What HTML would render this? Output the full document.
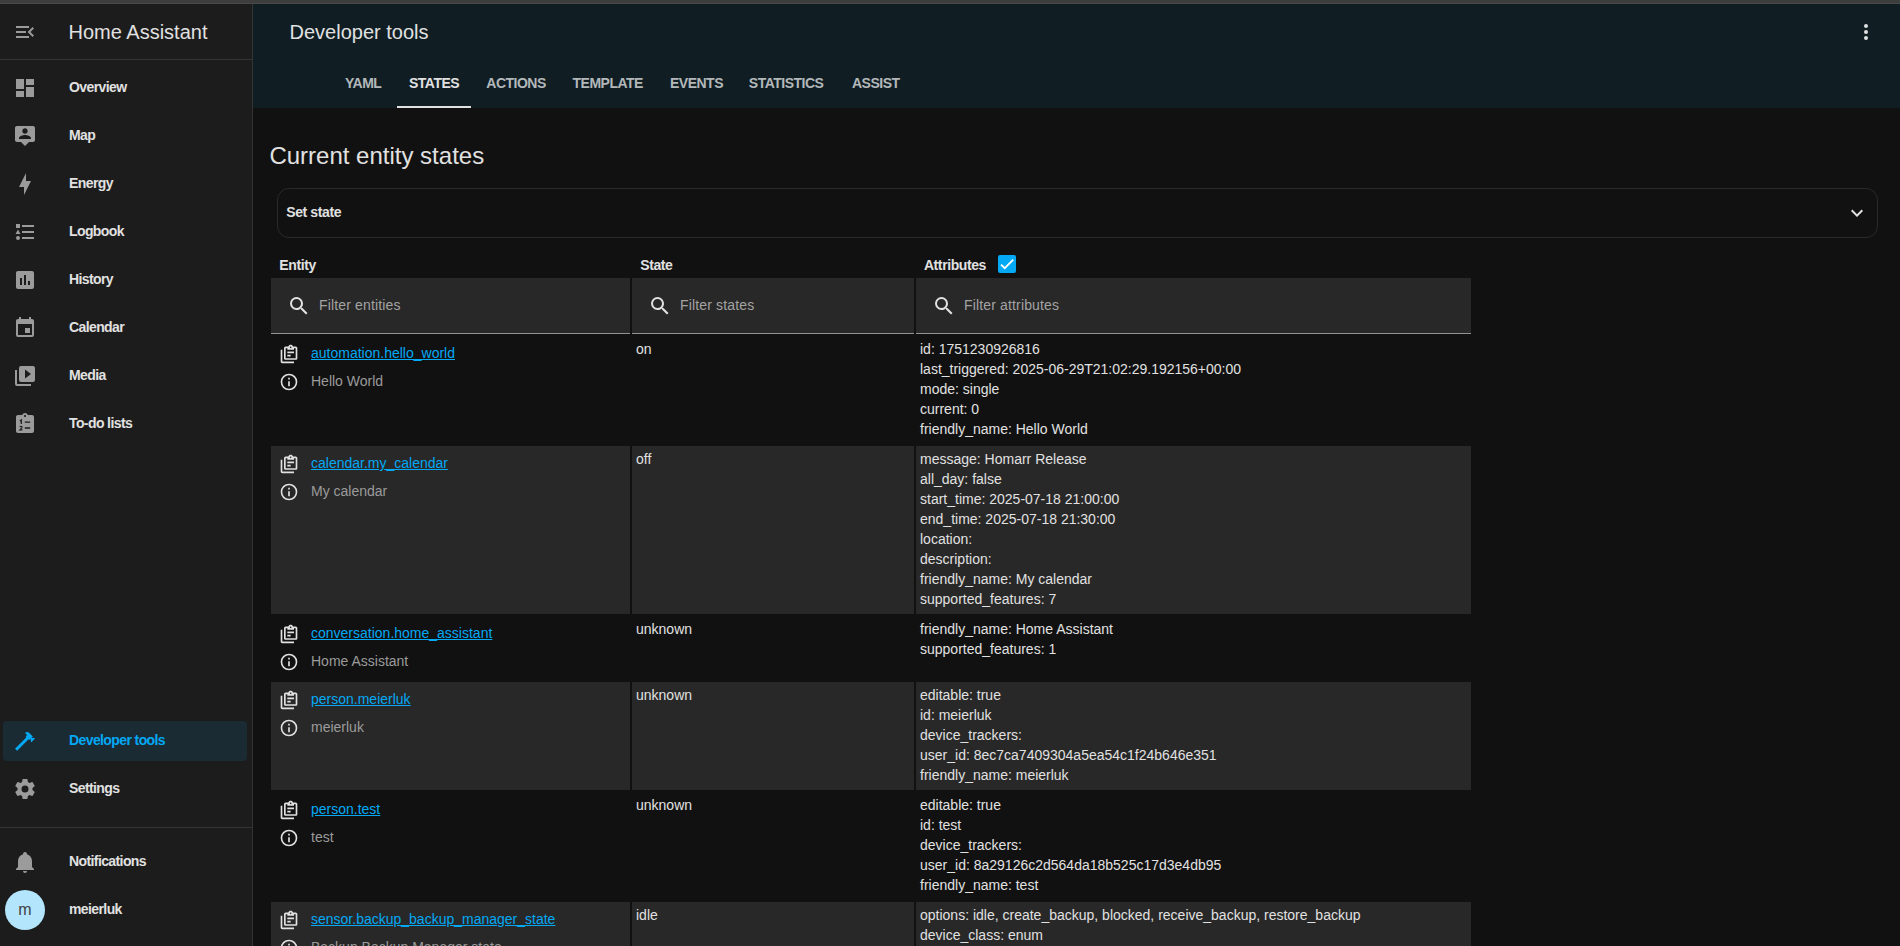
<!DOCTYPE html>
<html><head><meta charset="utf-8"><style>
html,body{margin:0;padding:0;width:1900px;height:946px;overflow:hidden;background:#111111;font-family:"Liberation Sans",sans-serif;}
#topbar{position:absolute;left:0;top:0;width:1900px;height:3px;background:#3d3d3d;border-bottom:1px solid #494949}
#sidebar{position:absolute;left:0;top:4px;width:252px;height:942px;background:#1c1c1c}
#header{position:absolute;left:253px;top:4px;width:1647px;height:104px;background:#101e24}
.hline{position:absolute;height:1px;background:#343434}
.vline{position:absolute;width:1px;background:#343434}
.ic{position:absolute;display:block}
.t{position:absolute;white-space:pre;color:#e1e1e1}
.h20{font-size:20px;line-height:24px}
.h24{font-size:24px;line-height:32px}
.side{font-size:14px;line-height:20px;font-weight:bold;letter-spacing:-0.6px}
.b14{font-size:14px;line-height:20px;font-weight:bold;letter-spacing:-0.4px}
.r14{font-size:14px;line-height:20px}
.sec{color:#9b9b9b}
.lnk{color:#03a9f4;text-decoration:underline}
.tab{font-size:14px;line-height:20px;font-weight:bold;letter-spacing:-0.5px;color:#b3b8ba}
.tab.act{color:#e1e1e1}
.sel{position:absolute;background:#1b2b34;border-radius:4px}
.avatar{position:absolute;width:40px;height:40px;border-radius:50%;background:#b3e5fc;color:#424242;font-size:16px;line-height:40px;text-align:center}
.card{position:absolute;border:1px solid #2a2a2a;border-radius:12px}
.cb{position:absolute;width:18px;height:18px;background:#03a9f4;border-radius:2px}
.filt{position:absolute;background:#282828}
.alt{position:absolute;background:#282828}
.fline{position:absolute;height:1px;background:#929292}
.ph{font-size:14px;line-height:20px;color:#a3a3a3;letter-spacing:0.15px}
</style></head><body>
<div id="topbar"></div>
<div id="sidebar"></div>
<div class="hline" style="left:0;top:59px;width:252px"></div>
<div class="vline" style="left:252px;top:4px;height:942px"></div>
<svg class="ic" style="left:13px;top:20px;width:24px;height:24px" viewBox="0 0 24 24"><path fill="#9b9b9b" d="M21,15.61L19.59,17L14.58,12L19.59,7L21,8.39L17.44,12L21,15.61M3,6H16V8H3V6M3,13V11H13V13H3M3,18V16H16V18H3Z"/></svg>
<div class="t h20" style="left:68.5px;top:20px;">Home Assistant</div>
<svg class="ic" style="left:13px;top:76px;width:24px;height:24px" viewBox="0 0 24 24"><path fill="#9b9b9b" d="M13,3V9H21V3M13,21H21V11H13M3,21H11V15H3M3,13H11V3H3V13Z"/></svg>
<div class="t side" style="left:69px;top:77px;">Overview</div>
<svg class="ic" style="left:13px;top:124px;width:24px;height:24px" viewBox="0 0 24 24"><path fill="#9b9b9b" d="M20 2H4C2.9 2 2 2.9 2 4V16C2 17.1 2.9 18 4 18H8L12 22L16 18H20C21.1 18 22 17.1 22 16V4C22 2.9 21.1 2 20 2M12 4.3C13.5 4.3 14.7 5.5 14.7 7S13.5 9.7 12 9.7 9.3 8.5 9.3 7 10.5 4.3 12 4.3M18 15H6V14.1C6 12.1 10 11 12 11S18 12.1 18 14.1V15Z"/></svg>
<div class="t side" style="left:69px;top:125px;">Map</div>
<svg class="ic" style="left:13px;top:172px;width:24px;height:24px" viewBox="0 0 24 24"><path fill="#9b9b9b" d="M11 15H6L13 1V9H18L11 23V15Z"/></svg>
<div class="t side" style="left:69px;top:173px;">Energy</div>
<svg class="ic" style="left:13px;top:220px;width:24px;height:24px" viewBox="0 0 24 24"><path fill="#9b9b9b" d="M5,9.5L7.5,14H2.5L5,9.5M3,4H7V8H3V4M5,20A2,2 0 0,0 7,18A2,2 0 0,0 5,16A2,2 0 0,0 3,18A2,2 0 0,0 5,20M9,5V7H21V5H9M9,19H21V17H9V19M9,13H21V11H9V13Z"/></svg>
<div class="t side" style="left:69px;top:221px;">Logbook</div>
<svg class="ic" style="left:13px;top:268px;width:24px;height:24px" viewBox="0 0 24 24"><path fill="#9b9b9b" d="M19 3H5C3.9 3 3 3.9 3 5V19C3 20.1 3.9 21 5 21H19C20.1 21 21 20.1 21 19V5C21 3.9 20.1 3 19 3M9 17H7V10H9V17M13 17H11V7H13V17M17 17H15V13H17V17Z"/></svg>
<div class="t side" style="left:69px;top:269px;">History</div>
<svg class="ic" style="left:13px;top:316px;width:24px;height:24px" viewBox="0 0 24 24"><path fill="#9b9b9b" d="M19,19H5V8H19M16,1V3H8V1H6V3H5C3.89,3 3,3.89 3,5V19A2,2 0 0,0 5,21H19A2,2 0 0,0 21,19V5C21,3.89 20.1,3 19,3H18V1M17,12H12V17H17V12Z"/></svg>
<div class="t side" style="left:69px;top:317px;">Calendar</div>
<svg class="ic" style="left:13px;top:364px;width:24px;height:24px" viewBox="0 0 24 24"><path fill="#9b9b9b" d="M4,6H2V20A2,2 0 0,0 4,22H18V20H4M22,4A2,2 0 0,0 20,2H8A2,2 0 0,0 6,4V16A2,2 0 0,0 8,18H20A2,2 0 0,0 22,16V4M12,14.5V5.5L18,10L12,14.5Z"/></svg>
<div class="t side" style="left:69px;top:365px;">Media</div>
<svg class="ic" style="left:13px;top:412px;width:24px;height:24px" viewBox="0 0 24 24"><path fill="#9b9b9b" d="M19 3H14.82C14.4 1.84 13.3 1 12 1S9.6 1.84 9.18 3H5C3.9 3 3 3.9 3 5V19C3 20.1 3.9 21 5 21H19C20.1 21 21 20.1 21 19V5C21 3.9 20.1 3 19 3M12 3C12.55 3 13 3.45 13 4S12.55 5 12 5 11 4.55 11 4 11.45 3 12 3Z"/><g fill="none" stroke="#1c1c1c"><path stroke-width="1.3" d="M6.9,9 8.3,8 V12"/><path stroke-width="1.1" d="M6.9,15.1 C7.1,14.5 7.6,14.3 8.1,14.3 C8.8,14.3 9.2,14.7 9.1,15.3 C9,15.8 8.6,16.2 6.9,17.9 H9.4"/><path stroke-width="1.3" d="M11.8,10.2 H17.2 M11.8,16 H17.2"/></g></svg>
<div class="t side" style="left:69px;top:413px;">To-do lists</div>
<div class="sel" style="left:3px;top:721px;width:244px;height:40px"></div>
<svg class="ic" style="left:13px;top:729px;width:24px;height:24px" viewBox="0 0 24 24"><path fill="#03a9f4" d="M2 19.63L13.43 8.2L12.72 7.5L14.14 6.07L12 3.89C13.2 2.7 15.09 2.7 16.27 3.89L19.87 7.5L18.45 8.91H21.29L22 9.62L18.45 13.21L17.74 12.5V9.62L16.27 11.04L15.56 10.33L4.13 21.76L2 19.63Z"/></svg>
<div class="t side" style="left:69px;top:730px;color:#03a9f4">Developer tools</div>
<svg class="ic" style="left:13px;top:777px;width:24px;height:24px" viewBox="0 0 24 24"><path fill="#9b9b9b" d="M12,15.5A3.5,3.5 0 0,1 8.5,12A3.5,3.5 0 0,1 12,8.5A3.5,3.5 0 0,1 15.5,12A3.5,3.5 0 0,1 12,15.5M19.43,12.97C19.47,12.65 19.5,12.33 19.5,12C19.5,11.67 19.47,11.34 19.43,11L21.54,9.37C21.73,9.22 21.78,8.95 21.66,8.73L19.66,5.27C19.54,5.05 19.27,4.96 19.05,5.05L16.56,6.05C16.04,5.66 15.5,5.32 14.87,5.07L14.5,2.42C14.46,2.18 14.25,2 14,2H10C9.75,2 9.54,2.18 9.5,2.42L9.13,5.07C8.5,5.32 7.96,5.66 7.44,6.05L4.95,5.05C4.73,4.96 4.46,5.05 4.34,5.27L2.34,8.73C2.21,8.95 2.27,9.22 2.46,9.37L4.57,11C4.53,11.34 4.5,11.67 4.5,12C4.5,12.33 4.53,12.65 4.57,12.97L2.46,14.63C2.27,14.78 2.21,15.05 2.34,15.27L4.34,18.73C4.46,18.95 4.73,19.03 4.95,18.95L7.44,17.94C7.96,18.34 8.5,18.68 9.13,18.93L9.5,21.58C9.54,21.82 9.75,22 10,22H14C14.25,22 14.46,21.82 14.5,21.58L14.87,18.93C15.5,18.67 16.04,18.34 16.56,17.94L19.05,18.95C19.27,19.03 19.54,18.95 19.66,18.73L21.66,15.27C21.78,15.05 21.73,14.78 21.54,14.63L19.43,12.97Z"/></svg>
<div class="t side" style="left:69px;top:778px;">Settings</div>
<div class="hline" style="left:0;top:827px;width:252px"></div>
<svg class="ic" style="left:13px;top:850px;width:24px;height:24px" viewBox="0 0 24 24"><path fill="#9b9b9b" d="M21,19V20H3V19L5,17V11C5,7.9 7.03,5.17 10,4.29C10,4.19 10,4.1 10,4A2,2 0 0,1 12,2A2,2 0 0,1 14,4C14,4.1 14,4.19 14,4.29C16.97,5.17 19,7.9 19,11V17L21,19M14,21A2,2 0 0,1 12,23A2,2 0 0,1 10,21"/></svg>
<div class="t side" style="left:69px;top:851px;">Notifications</div>
<div class="avatar" style="left:5px;top:890px">m</div>
<div class="t side" style="left:69px;top:899px;">meierluk</div>
<div id="header"></div>
<div class="t h20" style="left:289.5px;top:20px;">Developer tools</div>
<svg class="ic" style="left:1854px;top:20px;width:24px;height:24px" viewBox="0 0 24 24"><path fill="#e1e1e1" d="M12,16A2,2 0 0,1 14,18A2,2 0 0,1 12,20A2,2 0 0,1 10,18A2,2 0 0,1 12,16M12,10A2,2 0 0,1 14,12A2,2 0 0,1 12,14A2,2 0 0,1 10,12A2,2 0 0,1 12,10M12,4A2,2 0 0,1 14,6A2,2 0 0,1 12,8A2,2 0 0,1 10,6A2,2 0 0,1 12,4Z"/></svg>
<div class="t tab" style="left:345px;top:73px;">YAML</div>
<div class="t tab act" style="left:409px;top:73px;">STATES</div>
<div class="t tab" style="left:486.3px;top:73px;">ACTIONS</div>
<div class="t tab" style="left:572.5px;top:73px;">TEMPLATE</div>
<div class="t tab" style="left:670px;top:73px;">EVENTS</div>
<div class="t tab" style="left:748.8px;top:73px;">STATISTICS</div>
<div class="t tab" style="left:852px;top:73px;">ASSIST</div>
<div style="position:absolute;left:397px;top:106px;width:74px;height:2px;background:#e1e1e1"></div>
<div class="t h24" style="left:269.4px;top:140px;">Current entity states</div>
<div class="card" style="left:277px;top:188px;width:1599px;height:48px"></div>
<div class="t b14" style="left:286.3px;top:202px;">Set state</div>
<svg class="ic" style="left:1845px;top:200.5px;width:24px;height:24px" viewBox="0 0 24 24"><path fill="#e1e1e1" d="M7.41,8.58L12,13.17L16.59,8.58L18,10L12,16L6,10L7.41,8.58Z"/></svg>
<div class="t b14" style="left:279.3px;top:255px;">Entity</div>
<div class="t b14" style="left:640.2px;top:255px;">State</div>
<div class="t b14" style="left:923.9px;top:255px;">Attributes</div>
<div class="cb" style="left:998px;top:255px"><svg viewBox="0 0 18 18" style="position:absolute;left:0;top:0;width:18px;height:18px"><path fill="none" stroke="#fff" stroke-width="1.85" d="M3.01,9.53 6.72,13.27 15.25,4.68"/></svg></div>
<div class="filt" style="left:271px;top:278px;width:359px;height:55px"></div>
<div class="fline" style="left:271px;top:333px;width:359px"></div>
<svg class="ic" style="left:287px;top:294px;width:24px;height:24px" viewBox="0 0 24 24"><path fill="#e1e1e1" d="M9.5,3A6.5,6.5 0 0,1 16,9.5C16,11.11 15.41,12.59 14.44,13.73L14.71,14H15.5L20.5,19L19,20.5L14,15.5V14.71L13.73,14.44C12.59,15.41 11.11,16 9.5,16A6.5,6.5 0 0,1 3,9.5A6.5,6.5 0 0,1 9.5,3M9.5,5C7,5 5,7 5,9.5C5,12 7,14 9.5,14C12,14 14,12 14,9.5C14,7 12,5 9.5,5Z"/></svg>
<div class="t ph" style="left:319px;top:294.5px;">Filter entities</div>
<div class="filt" style="left:632px;top:278px;width:282px;height:55px"></div>
<div class="fline" style="left:632px;top:333px;width:282px"></div>
<svg class="ic" style="left:648px;top:294px;width:24px;height:24px" viewBox="0 0 24 24"><path fill="#e1e1e1" d="M9.5,3A6.5,6.5 0 0,1 16,9.5C16,11.11 15.41,12.59 14.44,13.73L14.71,14H15.5L20.5,19L19,20.5L14,15.5V14.71L13.73,14.44C12.59,15.41 11.11,16 9.5,16A6.5,6.5 0 0,1 3,9.5A6.5,6.5 0 0,1 9.5,3M9.5,5C7,5 5,7 5,9.5C5,12 7,14 9.5,14C12,14 14,12 14,9.5C14,7 12,5 9.5,5Z"/></svg>
<div class="t ph" style="left:680px;top:294.5px;">Filter states</div>
<div class="filt" style="left:916px;top:278px;width:555px;height:55px"></div>
<div class="fline" style="left:916px;top:333px;width:555px"></div>
<svg class="ic" style="left:932px;top:294px;width:24px;height:24px" viewBox="0 0 24 24"><path fill="#e1e1e1" d="M9.5,3A6.5,6.5 0 0,1 16,9.5C16,11.11 15.41,12.59 14.44,13.73L14.71,14H15.5L20.5,19L19,20.5L14,15.5V14.71L13.73,14.44C12.59,15.41 11.11,16 9.5,16A6.5,6.5 0 0,1 3,9.5A6.5,6.5 0 0,1 9.5,3M9.5,5C7,5 5,7 5,9.5C5,12 7,14 9.5,14C12,14 14,12 14,9.5C14,7 12,5 9.5,5Z"/></svg>
<div class="t ph" style="left:964px;top:294.5px;">Filter attributes</div>
<svg class="ic" style="left:279px;top:344px;width:20px;height:20px" viewBox="0 0 24 24"><path fill="#e1e1e1" d="M4 7V21H18V23H4C2.9 23 2 22.1 2 21V7H4M20 3C21.1 3 22 3.9 22 5V17C22 18.1 21.1 19 20 19H8C6.9 19 6 18.1 6 17V5C6 3.9 6.9 3 8 3H11.18C11.6 1.84 12.7 1 14 1C15.3 1 16.4 1.84 16.82 3H20M14 3C13.45 3 13 3.45 13 4C13 4.55 13.45 5 14 5C14.55 5 15 4.55 15 4C15 3.45 14.55 3 14 3M10 7V5H8V17H20V5H18V7H10M18 9H10V11H18V9M14 13H10V15H14V13Z"/></svg>
<div class="t r14" style="left:311px;top:343px;"><span class="lnk">automation.hello_world</span></div>
<svg class="ic" style="left:279px;top:372px;width:20px;height:20px" viewBox="0 0 24 24"><path fill="#e1e1e1" d="M11,9H13V7H11M12,20C7.59,20 4,16.41 4,12C4,7.59 7.59,4 12,4C16.41,4 20,7.59 20,12C20,16.41 16.41,20 12,20M12,2A10,10 0 0,0 2,12A10,10 0 0,0 12,22A10,10 0 0,0 22,12A10,10 0 0,0 12,2M11,17H13V11H11V17Z"/></svg>
<div class="t r14 sec" style="left:311px;top:371px;">Hello World</div>
<div class="t r14" style="left:636px;top:339px;">on</div>
<div class="t r14" style="left:920px;top:339px">id: 1751230926816<br>last_triggered: 2025-06-29T21:02:29.192156+00:00<br>mode: single<br>current: 0<br>friendly_name: Hello World</div>
<div class="alt" style="left:271px;top:446px;width:359px;height:168px"></div>
<div class="alt" style="left:632px;top:446px;width:282px;height:168px"></div>
<div class="alt" style="left:916px;top:446px;width:555px;height:168px"></div>
<svg class="ic" style="left:279px;top:454px;width:20px;height:20px" viewBox="0 0 24 24"><path fill="#e1e1e1" d="M4 7V21H18V23H4C2.9 23 2 22.1 2 21V7H4M20 3C21.1 3 22 3.9 22 5V17C22 18.1 21.1 19 20 19H8C6.9 19 6 18.1 6 17V5C6 3.9 6.9 3 8 3H11.18C11.6 1.84 12.7 1 14 1C15.3 1 16.4 1.84 16.82 3H20M14 3C13.45 3 13 3.45 13 4C13 4.55 13.45 5 14 5C14.55 5 15 4.55 15 4C15 3.45 14.55 3 14 3M10 7V5H8V17H20V5H18V7H10M18 9H10V11H18V9M14 13H10V15H14V13Z"/></svg>
<div class="t r14" style="left:311px;top:453px;"><span class="lnk">calendar.my_calendar</span></div>
<svg class="ic" style="left:279px;top:482px;width:20px;height:20px" viewBox="0 0 24 24"><path fill="#e1e1e1" d="M11,9H13V7H11M12,20C7.59,20 4,16.41 4,12C4,7.59 7.59,4 12,4C16.41,4 20,7.59 20,12C20,16.41 16.41,20 12,20M12,2A10,10 0 0,0 2,12A10,10 0 0,0 12,22A10,10 0 0,0 22,12A10,10 0 0,0 12,2M11,17H13V11H11V17Z"/></svg>
<div class="t r14 sec" style="left:311px;top:481px;">My calendar</div>
<div class="t r14" style="left:636px;top:449px;">off</div>
<div class="t r14" style="left:920px;top:449px">message: Homarr Release<br>all_day: false<br>start_time: 2025-07-18 21:00:00<br>end_time: 2025-07-18 21:30:00<br>location: <br>description: <br>friendly_name: My calendar<br>supported_features: 7</div>
<svg class="ic" style="left:279px;top:624px;width:20px;height:20px" viewBox="0 0 24 24"><path fill="#e1e1e1" d="M4 7V21H18V23H4C2.9 23 2 22.1 2 21V7H4M20 3C21.1 3 22 3.9 22 5V17C22 18.1 21.1 19 20 19H8C6.9 19 6 18.1 6 17V5C6 3.9 6.9 3 8 3H11.18C11.6 1.84 12.7 1 14 1C15.3 1 16.4 1.84 16.82 3H20M14 3C13.45 3 13 3.45 13 4C13 4.55 13.45 5 14 5C14.55 5 15 4.55 15 4C15 3.45 14.55 3 14 3M10 7V5H8V17H20V5H18V7H10M18 9H10V11H18V9M14 13H10V15H14V13Z"/></svg>
<div class="t r14" style="left:311px;top:623px;"><span class="lnk">conversation.home_assistant</span></div>
<svg class="ic" style="left:279px;top:652px;width:20px;height:20px" viewBox="0 0 24 24"><path fill="#e1e1e1" d="M11,9H13V7H11M12,20C7.59,20 4,16.41 4,12C4,7.59 7.59,4 12,4C16.41,4 20,7.59 20,12C20,16.41 16.41,20 12,20M12,2A10,10 0 0,0 2,12A10,10 0 0,0 12,22A10,10 0 0,0 22,12A10,10 0 0,0 12,2M11,17H13V11H11V17Z"/></svg>
<div class="t r14 sec" style="left:311px;top:651px;">Home Assistant</div>
<div class="t r14" style="left:636px;top:619px;">unknown</div>
<div class="t r14" style="left:920px;top:619px">friendly_name: Home Assistant<br>supported_features: 1</div>
<div class="alt" style="left:271px;top:682px;width:359px;height:108px"></div>
<div class="alt" style="left:632px;top:682px;width:282px;height:108px"></div>
<div class="alt" style="left:916px;top:682px;width:555px;height:108px"></div>
<svg class="ic" style="left:279px;top:690px;width:20px;height:20px" viewBox="0 0 24 24"><path fill="#e1e1e1" d="M4 7V21H18V23H4C2.9 23 2 22.1 2 21V7H4M20 3C21.1 3 22 3.9 22 5V17C22 18.1 21.1 19 20 19H8C6.9 19 6 18.1 6 17V5C6 3.9 6.9 3 8 3H11.18C11.6 1.84 12.7 1 14 1C15.3 1 16.4 1.84 16.82 3H20M14 3C13.45 3 13 3.45 13 4C13 4.55 13.45 5 14 5C14.55 5 15 4.55 15 4C15 3.45 14.55 3 14 3M10 7V5H8V17H20V5H18V7H10M18 9H10V11H18V9M14 13H10V15H14V13Z"/></svg>
<div class="t r14" style="left:311px;top:689px;"><span class="lnk">person.meierluk</span></div>
<svg class="ic" style="left:279px;top:718px;width:20px;height:20px" viewBox="0 0 24 24"><path fill="#e1e1e1" d="M11,9H13V7H11M12,20C7.59,20 4,16.41 4,12C4,7.59 7.59,4 12,4C16.41,4 20,7.59 20,12C20,16.41 16.41,20 12,20M12,2A10,10 0 0,0 2,12A10,10 0 0,0 12,22A10,10 0 0,0 22,12A10,10 0 0,0 12,2M11,17H13V11H11V17Z"/></svg>
<div class="t r14 sec" style="left:311px;top:717px;">meierluk</div>
<div class="t r14" style="left:636px;top:685px;">unknown</div>
<div class="t r14" style="left:920px;top:685px">editable: true<br>id: meierluk<br>device_trackers: <br>user_id: 8ec7ca7409304a5ea54c1f24b646e351<br>friendly_name: meierluk</div>
<svg class="ic" style="left:279px;top:800px;width:20px;height:20px" viewBox="0 0 24 24"><path fill="#e1e1e1" d="M4 7V21H18V23H4C2.9 23 2 22.1 2 21V7H4M20 3C21.1 3 22 3.9 22 5V17C22 18.1 21.1 19 20 19H8C6.9 19 6 18.1 6 17V5C6 3.9 6.9 3 8 3H11.18C11.6 1.84 12.7 1 14 1C15.3 1 16.4 1.84 16.82 3H20M14 3C13.45 3 13 3.45 13 4C13 4.55 13.45 5 14 5C14.55 5 15 4.55 15 4C15 3.45 14.55 3 14 3M10 7V5H8V17H20V5H18V7H10M18 9H10V11H18V9M14 13H10V15H14V13Z"/></svg>
<div class="t r14" style="left:311px;top:799px;"><span class="lnk">person.test</span></div>
<svg class="ic" style="left:279px;top:828px;width:20px;height:20px" viewBox="0 0 24 24"><path fill="#e1e1e1" d="M11,9H13V7H11M12,20C7.59,20 4,16.41 4,12C4,7.59 7.59,4 12,4C16.41,4 20,7.59 20,12C20,16.41 16.41,20 12,20M12,2A10,10 0 0,0 2,12A10,10 0 0,0 12,22A10,10 0 0,0 22,12A10,10 0 0,0 12,2M11,17H13V11H11V17Z"/></svg>
<div class="t r14 sec" style="left:311px;top:827px;">test</div>
<div class="t r14" style="left:636px;top:795px;">unknown</div>
<div class="t r14" style="left:920px;top:795px">editable: true<br>id: test<br>device_trackers: <br>user_id: 8a29126c2d564da18b525c17d3e4db95<br>friendly_name: test</div>
<div class="alt" style="left:271px;top:902px;width:359px;height:64px"></div>
<div class="alt" style="left:632px;top:902px;width:282px;height:64px"></div>
<div class="alt" style="left:916px;top:902px;width:555px;height:64px"></div>
<svg class="ic" style="left:279px;top:910px;width:20px;height:20px" viewBox="0 0 24 24"><path fill="#e1e1e1" d="M4 7V21H18V23H4C2.9 23 2 22.1 2 21V7H4M20 3C21.1 3 22 3.9 22 5V17C22 18.1 21.1 19 20 19H8C6.9 19 6 18.1 6 17V5C6 3.9 6.9 3 8 3H11.18C11.6 1.84 12.7 1 14 1C15.3 1 16.4 1.84 16.82 3H20M14 3C13.45 3 13 3.45 13 4C13 4.55 13.45 5 14 5C14.55 5 15 4.55 15 4C15 3.45 14.55 3 14 3M10 7V5H8V17H20V5H18V7H10M18 9H10V11H18V9M14 13H10V15H14V13Z"/></svg>
<div class="t r14" style="left:311px;top:909px;"><span class="lnk">sensor.backup_backup_manager_state</span></div>
<svg class="ic" style="left:279px;top:938px;width:20px;height:20px" viewBox="0 0 24 24"><path fill="#e1e1e1" d="M11,9H13V7H11M12,20C7.59,20 4,16.41 4,12C4,7.59 7.59,4 12,4C16.41,4 20,7.59 20,12C20,16.41 16.41,20 12,20M12,2A10,10 0 0,0 2,12A10,10 0 0,0 12,22A10,10 0 0,0 22,12A10,10 0 0,0 12,2M11,17H13V11H11V17Z"/></svg>
<div class="t r14 sec" style="left:311px;top:937px;">Backup Backup Manager state</div>
<div class="t r14" style="left:636px;top:905px;">idle</div>
<div class="t r14" style="left:920px;top:905px">options: idle, create_backup, blocked, receive_backup, restore_backup<br>device_class: enum</div>
</body></html>
